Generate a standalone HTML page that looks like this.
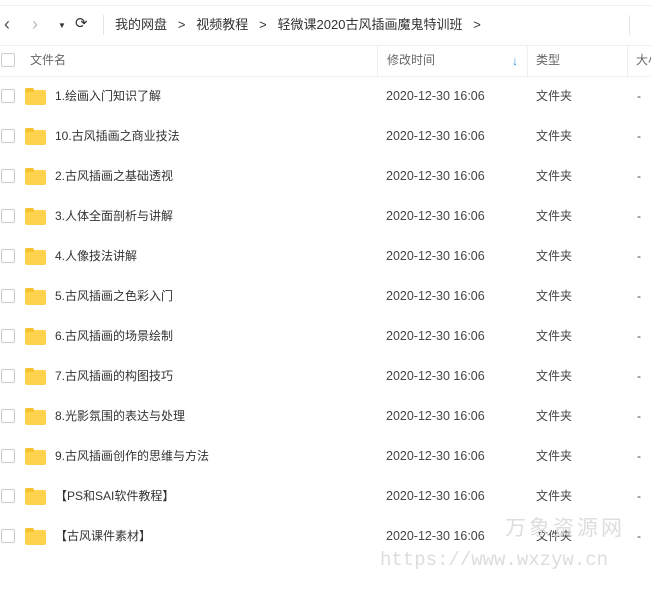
<!DOCTYPE html><html><head><meta charset="utf-8"><style>
body{margin:0;width:651px;height:593px;background:#fff;font-family:"Liberation Sans","Noto Sans CJK SC",sans-serif;font-size:12px;color:#333;position:relative;overflow:hidden}
.a{position:absolute;white-space:nowrap;line-height:16px;height:16px}
.cb{position:absolute;left:1px;width:12px;height:12px;border:1px solid #ccc;border-radius:2px;background:#fff}
.fd{position:absolute;left:25px;width:21px;height:15px;background:#ffd24d;border-radius:2px}
.fd:before{content:"";position:absolute;left:0;top:-2px;width:9px;height:4px;background:#f5c232;border-radius:2px 2px 0 0}
.g{color:#444}
.d{font-size:12.5px}
</style></head><body>
<div class="a" style="left:0;top:5px;width:651px;height:1px;background:#eee"></div>
<div class="a" style="left:4px;top:16px;font-size:18px;color:#555">&lsaquo;</div>
<div class="a" style="left:32px;top:16px;font-size:18px;color:#bbb">&rsaquo;</div>
<div class="a" style="left:58px;top:18px;font-size:8px;color:#333">▼</div>
<div class="a" style="left:75px;top:16px;font-size:15px;color:#333">⟳</div>
<div class="a" style="left:103px;top:15px;width:1px;height:20px;background:#e5e5e5"></div>
<div class="a" style="left:115px;top:17px;font-size:13px">我的网盘 &nbsp; &gt; &nbsp; 视频教程 &nbsp; &gt; &nbsp; 轻微课2020古风插画魔鬼特训班 &nbsp; &gt;</div>
<div class="a" style="left:629px;top:15px;width:1px;height:20px;background:#e5e5e5"></div>
<div class="a" style="left:0;top:45px;width:651px;height:1px;background:#eee"></div>
<div class="cb" style="top:53px"></div>
<div class="a" style="left:30px;top:52px;color:#666">文件名</div>
<div class="a" style="left:377px;top:46px;width:1px;height:30px;background:#eee"></div>
<div class="a" style="left:387px;top:52px;color:#666">修改时间</div>
<div class="a" style="left:512px;top:53px;color:#2b8fe8;font-size:12px;font-weight:bold">↓</div>
<div class="a" style="left:527px;top:46px;width:1px;height:30px;background:#eee"></div>
<div class="a" style="left:536px;top:52px;color:#666">类型</div>
<div class="a" style="left:627px;top:46px;width:1px;height:30px;background:#eee"></div>
<div class="a" style="left:636px;top:52px;color:#666">大小</div>
<div class="a" style="left:0;top:76px;width:651px;height:1px;background:#f0f0f0"></div>
<div id="rows"></div>
<div class="a" style="left:505px;top:516px;font-size:21px;line-height:26px;height:26px;color:#ddd;letter-spacing:3px">万象资源网</div>
<div class="a" style="left:380px;top:549px;font-size:19px;line-height:22px;height:22px;color:#ddd;font-family:'Liberation Mono',monospace">https://www.wxzyw.cn</div>
<script>
var n=["1.绘画入门知识了解","10.古风插画之商业技法","2.古风插画之基础透视","3.人体全面剖析与讲解","4.人像技法讲解","5.古风插画之色彩入门","6.古风插画的场景绘制","7.古风插画的构图技巧","8.光影氛围的表达与处理","9.古风插画创作的思维与方法","【PS和SAI软件教程】","【古风课件素材】"],h="";
n.forEach(function(s,i){var y=96+40*i;h+='<div class="cb" style="top:'+(y-7)+'px"></div><div class="fd" style="top:'+(y-6)+'px"></div><div class="a" style="left:55px;top:'+(y-8)+'px">'+s+'</div><div class="a g d" style="left:386px;top:'+(y-8)+'px">2020-12-30 16:06</div><div class="a g" style="left:536px;top:'+(y-8)+'px">文件夹</div><div class="a g" style="left:637px;top:'+(y-8)+'px">-</div>';});
document.getElementById("rows").innerHTML=h;
</script>
</body></html>
